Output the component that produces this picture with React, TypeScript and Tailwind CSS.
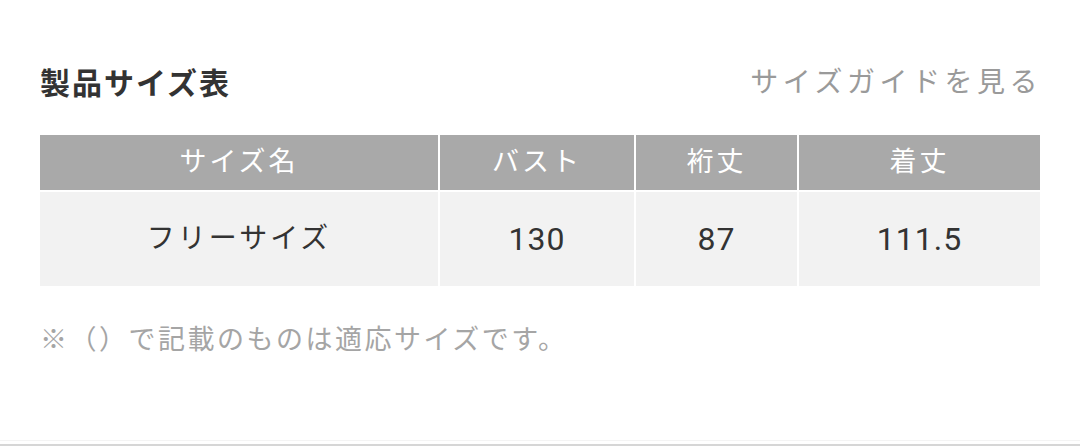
const headers = ['サイズ名', 'バスト', '裄丈', '着丈'];
const row = ['フリーサイズ', '130', '87', '111.5'];

export default function App() {
  return (
    <div
      className="w-[1080px] h-[446px] bg-white flex flex-col"
      style={{ fontFamily: "Roboto, 'Noto Sans CJK JP', sans-serif" }}
    >
      <div className="px-10 pt-[64px] flex-1">
        <div className="flex items-center justify-between h-[38px]">
          <h2 className="text-[30px] font-bold text-[#333] tracking-[2px]">製品サイズ表</h2>
          <span className="text-[28px] text-[#9a9a9a] tracking-[4.5px] -mr-[2px]">サイズガイドを見る</span>
        </div>

        <div className="mt-[33px] grid grid-cols-[398px_194px_161px_1fr] gap-[2px]">
          {headers.map((h) => (
            <div
              key={h}
              className="h-[55px] bg-[#a9a9a9] text-white text-[27px] tracking-[3px] flex items-center justify-center"
            >
              {h}
            </div>
          ))}
          {row.map((c, i) => (
            <div
              key={c}
              className={
                i === 0
                  ? 'h-[94px] bg-[#f2f2f2] text-[#333] text-[28px] tracking-[3px] flex items-center justify-center'
                  : 'h-[94px] bg-[#f2f2f2] text-[#333] text-[32px] tracking-[1px] flex items-center justify-center'
              }
            >
              {c}
            </div>
          ))}
        </div>

        <p className="mt-[34px] text-[27px] text-[#a5a5a5] tracking-[2.5px]">※（）で記載のものは適応サイズです。</p>
      </div>
      <div className="h-[1px] bg-[#f4f4f4] mb-[3px]" />
      <div className="h-[2px] bg-[#d6d6d6]" />
    </div>
  );
}
